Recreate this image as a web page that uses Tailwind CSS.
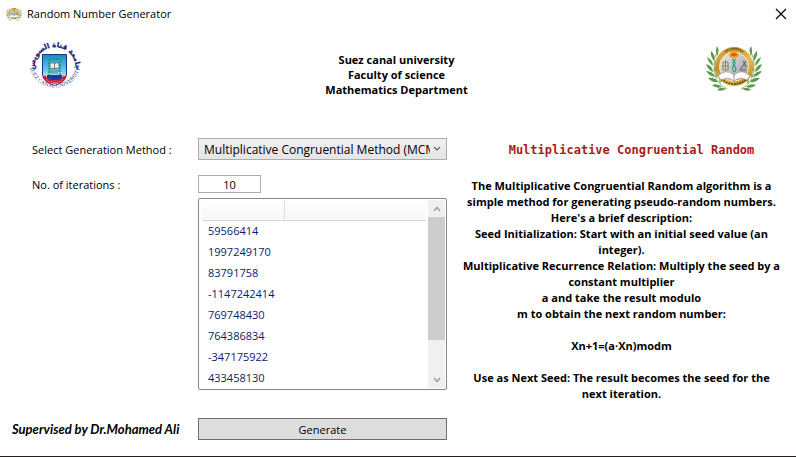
<!DOCTYPE html>
<html lang="en">
<head>
<meta charset="utf-8">
<meta name="viewport" content="width=device-width, initial-scale=1">
<title>Random Number Generator</title>
<script src="https://cdn.jsdelivr.net/npm/@tailwindcss/browser@4"></script>
</head>
<body class="flex min-h-screen flex-col border-b border-[#231f20] bg-white font-['Open_Sans','Noto_Sans',sans-serif] text-[11px] leading-4 text-black">

<svg class="absolute size-0" aria-hidden="true">
  <defs>
    <linearGradient id="gold" x1="0" y1="0" x2="1" y2="1">
      <stop offset="0" stop-color="#f0d675"/><stop offset=".3" stop-color="#c08f2a"/><stop offset=".6" stop-color="#e8c152"/><stop offset="1" stop-color="#a87416"/>
    </linearGradient>
    <linearGradient id="silver" x1="0" y1="0" x2="1" y2="1">
      <stop offset="0" stop-color="#ececec"/><stop offset=".5" stop-color="#c4c4c8"/><stop offset="1" stop-color="#929296"/>
    </linearGradient>
    <g id="leaves" fill="#5f9a4c">
      <path d="M16 43Q10 45 6 41Q12 39 16 43Z"/><path d="M12 38Q6 39 2 34Q9 33 12 38Z"/><path d="M9 33Q3 32 0 27Q7 27 9 33Z"/><path d="M7 28Q2 26 0 20Q7 22 7 28Z"/><path d="M7 22Q2 18 1 13Q7 16 7 22Z"/><path d="M8 17Q4 12 5 7Q10 11 8 17Z"/><path d="M11 12Q9 7 11 2Q14 7 11 12Z"/>
      <path d="M20 45Q15 48 11 46Q15 42 20 45Z"/>
      <g fill="#91bd7e"><path d="M14 40Q12 36 14 33Q17 37 14 40Z"/><path d="M10 34Q8 30 11 27Q13 31 10 34Z"/><path d="M8 28Q7 24 10 21Q11 25 8 28Z"/><path d="M8 21Q8 17 12 15Q12 19 8 21Z"/></g>
      <path d="M21 45Q7 38 8 22Q8 12 12 7" fill="none" stroke="#6d9c5e" stroke-width=".7"/>
    </g>
    <symbol id="faculty" viewBox="0 0 56 48">
      <use href="#leaves"/>
      <use href="#leaves" transform="matrix(-1 0 0 1 56 0)"/>
      <ellipse cx="28" cy="22.500" rx="19.500" ry="19.500" fill="url(#gold)"/>
      <ellipse cx="28" cy="22.500" rx="14.500" ry="14.500" fill="url(#silver)" stroke="#f8e9ac" stroke-width="1"/>
      <path d="M19 8Q28 1 37 8" fill="none" stroke="#5b4312" stroke-width="1.400" stroke-dasharray="1.500 .8"/>
      <path d="M15 35Q28 45 41 35" fill="none" stroke="#604714" stroke-width="1.600" stroke-dasharray="2 .8"/>
      <ellipse cx="28" cy="11" rx="5" ry="3" fill="#f39a1d"/><ellipse cx="28" cy="10.500" rx="3" ry="1.500" fill="#e45a16"/>
      <path d="M26 15Q31 18 28 21T28 28M30 15Q25 18 28 21T29 28" fill="none" stroke="#25a58c" stroke-width="1.200"/>
      <path d="M17 18h5v8h-5zM19.500 16v10M16 22h7" fill="#d8d8a8" stroke="#7d8266" stroke-width=".9"/>
      <path d="M37 17L40 23M40 17L34 26M34 26h6" fill="none" stroke="#62666d" stroke-width="1.100"/>
      <path d="M12 32Q20 24 28 31Q36 24 44 32L41 36Q34 32 28 37Q22 32 15 36Z" fill="#fff" stroke="#8b8b8b" stroke-width=".6"/>
      <path d="M28 31v6" stroke="#777" stroke-width=".8"/>
    </symbol>
  </defs>
</svg>

<header class="flex h-7 items-center justify-between pl-1.5 pr-[9px]">
  <div class="flex items-center gap-[5px]">
    <svg class="size-4" viewBox="0 0 56 48" aria-hidden="true"><use href="#faculty" width="56" height="48"/></svg>
    <h1>Random Number Generator</h1>
  </div>
  <button type="button" aria-label="Close" class="p-0">
    <svg class="size-3" viewBox="0 0 12 12" fill="none" stroke="#000" stroke-width="1.200"><path d="M1 1L11 11M11 1L1 11"/></svg>
  </button>
</header>

<section class="grid grid-cols-[1fr_auto_1fr] items-start pl-[27px] pr-[34px] pt-3">
  <svg class="h-14 w-14" viewBox="0 0 56 56" role="img" aria-label="Suez Canal University">
    <defs>
      <linearGradient id="sky" x1="0" y1="0" x2="0" y2="1"><stop offset="0" stop-color="#138ac8"/><stop offset=".5" stop-color="#68c5ea"/><stop offset=".8" stop-color="#e4f5fb"/><stop offset="1" stop-color="#fff"/></linearGradient>
      <path id="arc-ar" d="M8.500 34A20.500 20.500 0 1 1 47.500 34"/>
      <path id="arc-en" d="M2 21A26 26.500 0 1 0 54 21"/>
    </defs>
    <text font-family="DejaVu Sans, sans-serif" font-size="7" font-weight="700" fill="#29217c" stroke="#29217c" stroke-width=".3" text-anchor="middle"><textPath href="#arc-ar" startOffset="50%">جامعة قناة السويس</textPath></text>
    <text font-family="Liberation Serif, serif" font-size="5.500" fill="#39338a" text-anchor="middle"><textPath href="#arc-en" startOffset="50%">SUEZ CANAL UNIVERSITY</textPath></text>
    <path d="M15.500 14.500H39.500V34Q39 42 27.500 45.500Q16 42 15.500 34Z" fill="url(#sky)" stroke="#17377c" stroke-width="1"/>
    <path d="M22 36V19H33V36" fill="none" stroke="#15956f" stroke-width="1.500" stroke-dasharray="2 1"/>
    <path d="M23 24Q25 21 27.500 24Q30 21 32 24V29Q29 27 27.500 29Q25 27 23 29Z" fill="#eee" stroke="#555" stroke-width=".7"/>
    <path d="M27.500 24v5" stroke="#555" stroke-width=".7"/>
    <path d="M22 31h10M23 33h8" stroke="#287c78" stroke-width=".8"/>
    <path d="M20 35H35V39Q27 42 20 39Z" fill="#173b9b"/>
    <path d="M17 36Q19 42 27.500 42Q36 42 38 36" fill="none" stroke="#c92335" stroke-width="3.500"/>
    <path d="M19 39Q22 42.500 27.500 42.500Q33 42.500 36 39" fill="none" stroke="#f2b2b5" stroke-width=".8" stroke-dasharray="1 1"/>
  </svg>
  <p class="pl-1 pt-3 text-center font-bold leading-[15px]">Suez canal university<br>Faculty of science<br>Mathematics Department</p>
  <svg class="mt-1 h-12 w-14 justify-self-end" viewBox="0 0 56 48" role="img" aria-label="Faculty of Science"><use href="#faculty" width="56" height="48"/></svg>
</section>

<main class="grid grid-cols-[166px_249px_1fr] pl-8 pt-[41px]">
  <form class="col-span-2 grid grid-cols-subgrid content-start">
    <label for="method" class="self-center pt-0.5">Select Generation Method :</label>
    <div class="relative">
      <select id="method" class="block h-[22px] w-full appearance-none overflow-hidden border border-[#acacac] bg-linear-to-b from-[#f0f0f0] to-[#e5e5e5] pl-[5px] pr-4 pt-px text-xs">
        <option>Multiplicative Congruential Method (MCM)</option>
      </select>
      <svg class="pointer-events-none absolute right-1.5 top-2 h-1.5 w-2" viewBox="0 0 8 6" fill="none" stroke="#606060" stroke-width="1.200" aria-hidden="true"><path d="M1 1L4 4L7 1"/></svg>
    </div>

    <label for="iterations" class="mt-[15px] self-center pt-0.5">No. of iterations :</label>
    <input id="iterations" type="text" value="10" class="mt-[15px] h-[18px] w-[63px] border border-[#abadb3] bg-white pt-px text-center text-[11px]">

    <div class="col-start-2 mt-[5px] flex rounded-xs border border-[#828790] p-px">
      <div class="min-w-0 flex-1 px-0.5">
        <table class="w-full table-fixed border-collapse text-left text-[#0c1c6c]">
          <colgroup><col class="w-[82px]"><col></colgroup>
          <thead>
            <tr class="h-5 border-b border-[#d5d5d5] bg-linear-to-b from-white to-[#f4f6f8]"><th scope="col" aria-label="Value" class="border-r border-[#dcdee1] p-0"></th><th scope="col" aria-label="Notes" class="p-0"></th></tr>
          </thead>
          <tbody>
            <tr class="h-[21px]"><td class="p-0 pl-1.5">59566414</td><td></td></tr>
            <tr class="h-[21px]"><td class="p-0 pl-1.5">1997249170</td><td></td></tr>
            <tr class="h-[21px]"><td class="p-0 pl-1.5">83791758</td><td></td></tr>
            <tr class="h-[21px]"><td class="p-0 pl-1.5">-1147242414</td><td></td></tr>
            <tr class="h-[21px]"><td class="p-0 pl-1.5">769748430</td><td></td></tr>
            <tr class="h-[21px]"><td class="p-0 pl-1.5">764386834</td><td></td></tr>
            <tr class="h-[21px]"><td class="p-0 pl-1.5">-347175922</td><td></td></tr>
            <tr class="h-[21px]"><td class="p-0 pl-1.5">433458130</td><td></td></tr>
          </tbody>
        </table>
      </div>
      <div class="flex w-[17px] flex-col bg-[#f0f0f0]">
        <button type="button" aria-label="Scroll up" class="flex h-[17px] items-center justify-center"><svg class="h-1.5 w-2" viewBox="0 0 8 6" fill="none" stroke="#a0a0a0" stroke-width="1.500"><path d="M1 5L4 1.500L7 5"/></svg></button>
        <div class="h-[123px] bg-[#cdcdcd]"></div>
        <button type="button" aria-label="Scroll down" class="mt-auto flex h-[17px] items-center justify-center"><svg class="h-1.5 w-2" viewBox="0 0 8 6" fill="none" stroke="#a0a0a0" stroke-width="1.500"><path d="M1 1L4 4.500L7 1"/></svg></button>
      </div>
    </div>

    <p class="-ml-5 mt-7 self-center whitespace-nowrap font-['Lato','Open_Sans',sans-serif] text-[13px] font-bold italic">Supervised by Dr.Mohamed Ali</p>
    <button type="button" class="mt-7 h-[22px] border border-[#707070] bg-[#dddddd] pt-px">Generate</button>
  </form>

  <section class="px-2 pt-1 text-center">
    <h2 class="pl-5 font-['DejaVu_Sans_Mono','Liberation_Mono',monospace] text-xs font-bold text-[#a81c1c]">Multiplicative Congruential Random</h2>
    <div class="mt-5 whitespace-nowrap font-bold leading-4">
      <p>The Multiplicative Congruential Random algorithm is a<br>simple method for generating pseudo-random numbers.<br>Here's a brief description:</p>
      <p>Seed Initialization: Start with an initial seed value (an<br>integer).</p>
      <p>Multiplicative Recurrence Relation: Multiply the seed by a<br>constant multiplier<br>a and take the result modulo<br>m to obtain the next random number:</p>
      <p class="my-4">Xn+1=(a·Xn)modm</p>
      <p>Use as Next Seed: The result becomes the seed for the<br>next iteration.</p>
    </div>
  </section>
</main>
</body>
</html>
